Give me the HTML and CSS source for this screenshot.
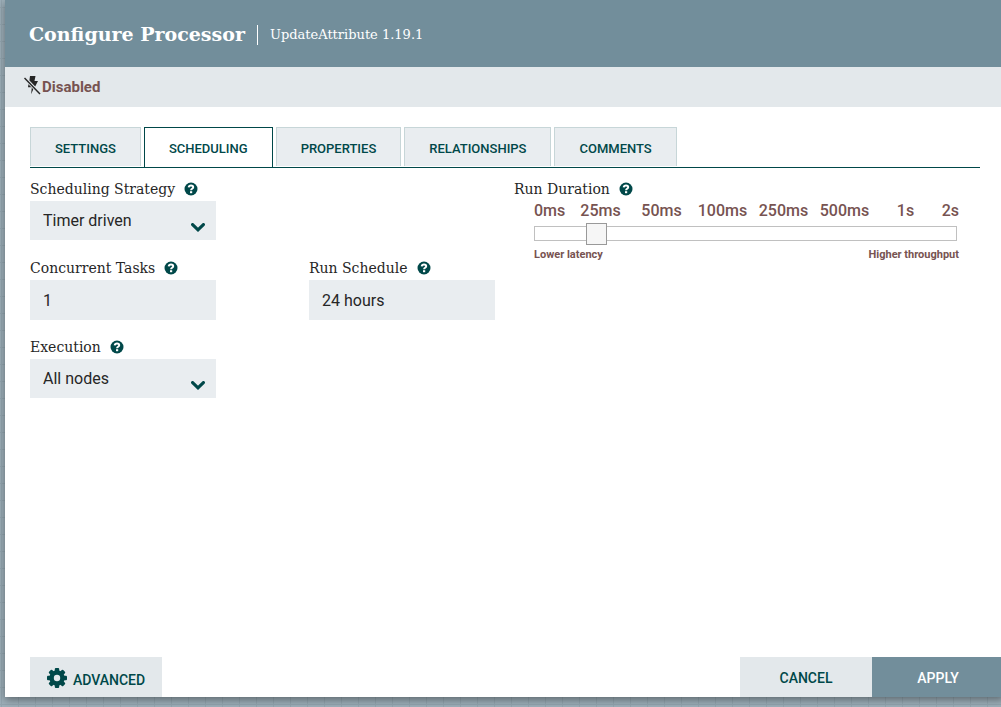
FILE: index.html
```
<!DOCTYPE html>
<html lang="en">
<head>
<meta charset="utf-8">
<title>Configure Processor</title>
<link rel="stylesheet" href="styles.css">
</head>
<body>
<svg class="symbols" aria-hidden="true">
  <symbol id="help" viewBox="0 0 14 14">
    <circle cx="7" cy="7" r="6.5" fill="#004849"/>
    <path d="M4.700 5.400C4.900 4.100 5.900 3.500 7 3.500c1.300 0 2.200.7 2.200 1.700 0 1.600-2.100 1.500-2.100 3" fill="none" stroke="#fff" stroke-width="2"/>
    <path d="M6 9.200h2.200v2H6z" fill="#fff"/>
  </symbol>
  <symbol id="chevron" viewBox="0 0 14 9">
    <path d="M1.600 1.600 7 6.800l5.400-5.200" fill="none" stroke="#004849" stroke-width="3.200" stroke-linecap="round"/>
  </symbol>
</svg>
<main class="dialog">
  <header class="dialog-header">
    <h1 class="title">Configure Processor</h1>
    <span class="subtitle">UpdateAttribute 1.19.1</span>
  </header>
  <div class="status">
    <svg class="status-icon" viewBox="0 0 17 19" aria-hidden="true">
      <path d="M6 0h5.500L10.500 5h3.500L11.200 10.500 5.400 4.500z" fill="#262626"/>
      <path d="M4.700 6.500 9.900 12 7.100 18.200 7.800 11.200H4z" fill="#262626"/>
      <path d="M.5 2 16 18" stroke="#e3e8eb" stroke-width="3"/>
      <path d="M.5 2 16 18" stroke="#262626" stroke-width="1.500"/>
    </svg>
    <span>Disabled</span>
  </div>
  <div class="content">
    <nav class="tabs" role="tablist">
      <button class="tab" role="tab">SETTINGS</button>
      <button class="tab tab-active" role="tab" aria-selected="true">SCHEDULING</button>
      <button class="tab" role="tab">PROPERTIES</button>
      <button class="tab" role="tab">RELATIONSHIPS</button>
      <button class="tab" role="tab">COMMENTS</button>
    </nav>
    <form class="form">
      <div class="field field-strategy">
        <div class="label-row"><label for="strategy">Scheduling Strategy</label><svg class="help"><use href="#help"/></svg></div>
        <div class="select-wrap">
          <select class="control" id="strategy"><option>Timer driven</option></select>
          <svg class="chevron"><use href="#chevron"/></svg>
        </div>
      </div>
      <div class="field field-duration">
        <div class="label-row"><label for="duration">Run Duration</label><svg class="help"><use href="#help"/></svg></div>
        <div class="duration">
          <div class="ticks">
            <span>0ms</span><span>25ms</span><span>50ms</span><span>100ms</span><span>250ms</span><span>500ms</span><span>1s</span><span>2s</span>
          </div>
          <input class="slider" id="duration" type="range" min="0" max="1000" value="128">
          <div class="hints"><span>Lower latency</span><span>Higher throughput</span></div>
        </div>
      </div>
      <div class="field">
        <div class="label-row"><label for="tasks">Concurrent Tasks</label><svg class="help"><use href="#help"/></svg></div>
        <input class="control control-text" id="tasks" type="text" value="1">
      </div>
      <div class="field">
        <div class="label-row"><label for="schedule">Run Schedule</label><svg class="help"><use href="#help"/></svg></div>
        <input class="control control-text" id="schedule" type="text" value="24 hours">
      </div>
      <div class="field field-execution">
        <div class="label-row"><label for="execution">Execution</label><svg class="help"><use href="#help"/></svg></div>
        <div class="select-wrap">
          <select class="control" id="execution"><option>All nodes</option></select>
          <svg class="chevron"><use href="#chevron"/></svg>
        </div>
      </div>
    </form>
  </div>
  <footer class="footer">
    <button class="button button-advanced">
      <svg class="gear" viewBox="0 0 20 20" aria-hidden="true">
        <g fill="#004849">
          <rect x="7.800" width="4.400" height="20" rx="1"/>
          <rect x="7.800" width="4.400" height="20" rx="1" transform="rotate(45 10 10)"/>
          <rect x="7.800" width="4.400" height="20" rx="1" transform="rotate(90 10 10)"/>
          <rect x="7.800" width="4.400" height="20" rx="1" transform="rotate(135 10 10)"/>
          <circle cx="10" cy="10" r="7.700"/>
        </g>
        <circle cx="10" cy="10" r="3.200" fill="#e3e8eb"/>
      </svg>
      <span>ADVANCED</span>
    </button>
    <button class="button button-cancel">CANCEL</button>
    <button class="button button-apply">APPLY</button>
  </footer>
</main>
</body>
</html>
```
FILE: styles.css
```
* { box-sizing: border-box; }

body {
  margin: 0;
  min-height: 100vh;
  padding: 0 0 10px 5px;
  display: flex;
  overflow: hidden;
  font-family: Roboto, sans-serif;
  color: #262626;
  background-color: #9dafb9;
  background-image:
    linear-gradient(#93a5af 1px, transparent 1px),
    linear-gradient(90deg, #93a5af 1px, transparent 1px);
  background-size: 17px 17px;
  background-position: 1px 7px;
}

button, input, select { font-family: inherit; margin: 0; border-radius: 0; }
button { cursor: pointer; }

.symbols { position: absolute; width: 0; height: 0; }

.dialog {
  flex: 1;
  display: flex;
  flex-direction: column;
  margin-right: -3px;
  background: #fff;
  box-shadow: 0 3px 8px rgba(0, 0, 0, 0.4);
}

.dialog-header {
  display: flex;
  align-items: center;
  height: 67px;
  padding: 0 24px;
  background: #728e9b;
  color: #fff;
  font-family: "Roboto Slab", "DejaVu Serif", serif;
}

.title { margin: 0; font-size: 19px; line-height: 24px; font-weight: 700; }

.subtitle {
  margin: 3px 0 0 12px;
  padding-left: 12px;
  border-left: 1px solid #fff;
  font-size: 13px;
  line-height: 20px;
}

.status {
  display: flex;
  align-items: center;
  gap: 1px;
  height: 40px;
  padding: 0 19px;
  background: #e3e8eb;
  color: #775351;
  font-size: 15px;
  font-weight: 700;
}

.status-icon { width: 17px; height: 19px; margin-bottom: 3px; }

.content { flex: 1; padding: 20px 24px 20px 25px; }

.tabs { display: flex; gap: 3px; height: 41px; border-bottom: 1px solid #004849; }

.tab {
  height: 39px;
  padding: 3px 24px 0;
  border: 1px solid #c7d6d8;
  border-bottom: 0;
  background: #e9edf0;
  color: #004849;
  font-size: 13px;
  font-weight: 500;
}

.tab-active { height: 40px; padding-bottom: 1px; border-color: #004849; background: #fff; }

.form {
  display: grid;
  grid-template-columns: 279fr 205fr 466fr;
  row-gap: 16px;
  margin-top: 11px;
}

.field { min-height: 63px; }
.field-strategy { grid-column: 1 / 3; }
.field-duration { grid-row: 1 / 3; grid-column: 3; }

.label-row {
  display: flex;
  align-items: center;
  gap: 9px;
  height: 20px;
  margin-bottom: 2px;
  font-family: "Roboto Slab", "DejaVu Serif", serif;
  font-size: 14px;
}

.help { width: 14px; height: 14px; }

.control {
  display: block;
  width: 186px;
  height: 39px;
  padding: 0 13px;
  border: 0;
  appearance: none;
  background: #e9edf0;
  color: #262626;
  font-size: 16px;
}

.control-text { height: 40px; }

.select-wrap { position: relative; width: 186px; }
.chevron { position: absolute; right: 11px; bottom: 8px; width: 14px; height: 9px; pointer-events: none; }

.duration { margin: 0 21px 0 20px; color: #775351; }

.ticks {
  display: grid;
  grid-template-columns: 36fr repeat(6, 61fr) 23fr;
  height: 25px;
  font-size: 16px;
  line-height: 20px;
  font-weight: 500;
  text-align: center;
}

.ticks span:first-child { text-align: left; }
.ticks span:last-child { text-align: right; }

.slider {
  display: block;
  width: calc(100% - 2px);
  height: 15px;
  border: 1px solid #c0c0c0;
  background: #fff;
  appearance: none;
}

.slider::-webkit-slider-thumb {
  appearance: none;
  width: 21px;
  height: 22px;
  border: 1px solid #999;
  background: #f6f6f6;
}

.hints {
  display: flex;
  justify-content: space-between;
  margin-top: 6px;
  font-size: 11px;
  line-height: 16px;
  font-weight: 700;
}

.footer { display: flex; height: 40px; padding-left: 25px; }

.button {
  display: flex;
  align-items: center;
  justify-content: center;
  width: 132px;
  padding: 2px 0 0;
  border: 0;
  background: #e3e8eb;
  color: #004849;
  font-size: 14px;
  font-weight: 500;
}

.button-advanced { gap: 6px; padding-top: 5px; margin-right: auto; }
.button-apply { background: #728e9b; color: #fff; }
.gear { width: 20px; height: 20px; margin-bottom: 3px; }
```
